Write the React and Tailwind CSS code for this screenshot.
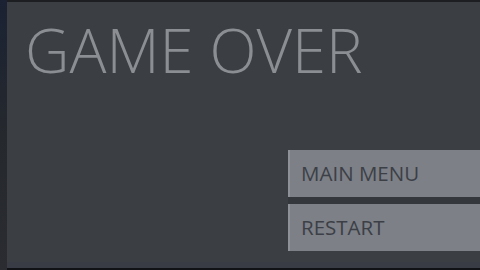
export default function App() {
  return (
    <div className="w-[480px] h-[270px] bg-[#1c1e22] flex overflow-hidden" style={{ fontFamily: '"Open Sans", "Noto Sans", sans-serif' }}>
      <div className="w-[7px] h-full bg-gradient-to-b from-[#1a2233] via-[#25282d] to-[#2a2c31]" />
      <div className="flex-1 flex flex-col pt-[2px]">
        <div className="flex-1 bg-[#3b3e43] flex flex-col">
          <div className="pl-[18px] pt-[10px] h-[148px]">
            <h1 className="text-[61.5px] leading-[74px] font-light text-[#8b8e93]">GAME OVER</h1>
          </div>
          <div className="flex flex-col items-end">
            <div className="w-[192px] h-[47px] bg-[#7d8087] border-l-2 border-[#8e9197] flex items-center pl-[11px]">
              <span className="text-[20.5px] text-[#3c3f46]">MAIN MENU</span>
            </div>
            <div className="w-[192px] h-[7px] bg-[#34373c]" />
            <div className="w-[192px] h-[47px] bg-[#7d8087] border-l-2 border-[#8e9197] flex items-center pl-[11px]">
              <span className="text-[20.5px] text-[#3c3f46]">RESTART</span>
            </div>
          </div>
          <div className="flex-1" />
        </div>
        <div className="h-[6px] bg-[#393b45]" />
        <div className="h-[2px] bg-[#111215]" />
      </div>
    </div>
  );
}
